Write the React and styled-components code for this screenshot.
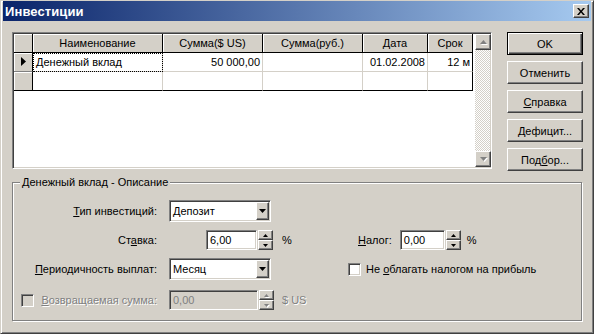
import styled, { createGlobalStyle, css } from "styled-components";

const GlobalStyle = createGlobalStyle`
  html, body { margin: 0; padding: 0; background: #d4d0c8; }
  body {
    font-family: "Liberation Sans", Arial, sans-serif;
    font-size: 11px;
    color: #000;
  }
  * { box-sizing: border-box; }
`;

const raised = css`
  border: 1px solid;
  border-color: #fff #404040 #404040 #fff;
  box-shadow: inset -1px -1px 0 #808080;
  background: #d4d0c8;
`;

const sunken = css`
  border: 1px solid;
  border-color: #808080 #fff #fff #808080;
  box-shadow: inset 1px 1px 0 #404040, inset -1px -1px 0 #d4d0c8;
  padding: 1px;
`;

const Window = styled.div`
  width: 594px;
  height: 334px;
  background: #d4d0c8;
  border: 1px solid;
  border-color: #d4d0c8 #404040 #404040 #d4d0c8;
  box-shadow: inset 1px 1px 0 #fff, inset -1px -1px 0 #808080;
  padding: 0 2px 2px 2px;
  display: flex;
  flex-direction: column;
`;

const TitleBar = styled.div`
  height: 20px;
  background: linear-gradient(to right, #0a246a, #a6caf0);
  display: flex;
  align-items: center;
  justify-content: space-between;
  padding: 0 2px 0 2px;
`;

const Title = styled.span`
  color: #fff;
  font-weight: bold;
  font-size: 13px;
  letter-spacing: 0.1px;
`;

const CloseButton = styled.div`
  ${raised};
  width: 16px;
  height: 14px;
  display: flex;
  align-items: center;
  justify-content: center;
`;

const Body = styled.div`
  flex: 1;
  padding: 11px 8px 0 9px;
  display: flex;
  flex-direction: column;
`;

const TopRow = styled.div`
  display: flex;
  gap: 15px;
  align-items: flex-start;
`;

const GridFrame = styled.div`
  ${sunken};
  width: 480px;
  height: 137px;
  background: #fff;
  display: flex;
  padding: 1px;
`;

const TableArea = styled.div`
  flex: 1;
  background: #fff;
`;

const Table = styled.table`
  border-collapse: separate;
  border-spacing: 0;
  table-layout: fixed;
  width: 459px;
`;

const HeadCell = styled.th`
  height: 19px;
  padding: 0 2px;
  font-weight: normal;
  text-align: center;
  white-space: nowrap;
  overflow: hidden;
  background: #d4d0c8;
  border-right: 1px solid #000;
  border-bottom: 1px solid #000;
  box-shadow: inset 1px 1px 0 #fff;
`;

const IndCell = styled.td`
  height: 19px;
  padding: 0;
  background: #d4d0c8;
  border-right: 1px solid #000;
  border-bottom: 1px solid ${(p) => (p.$last ? "#000" : "#808080")};
  box-shadow: inset 1px 1px 0 #fff;
  text-align: center;
  vertical-align: middle;
`;

const Cell = styled.td`
  height: 19px;
  padding: 0 2px 0 3px;
  white-space: nowrap;
  overflow: hidden;
  text-align: ${(p) => p.$align || "left"};
  border-right: 1px solid ${(p) => (p.$lastCol ? "#000" : "#d4d0c8")};
  border-bottom: 1px solid ${(p) => (p.$last ? "#000" : "#d4d0c8")};
  ${(p) =>
    p.$focus &&
    css`
      outline: 1px dotted #000;
      outline-offset: -1px;
    `}
`;

const ScrollBar = styled.div`
  width: 16px;
  display: flex;
  flex-direction: column;
  border-left: 1px solid #fff;
`;

const ScrollButton = styled.div`
  ${raised};
  width: 16px;
  height: 16px;
  display: flex;
  align-items: center;
  justify-content: center;
`;

const ScrollTrack = styled.div`
  flex: 1;
  background-color: #fff;
  background-image: repeating-conic-gradient(#d4d0c8 0 25%, #fff 0 50%);
  background-size: 2px 2px;
`;

const ButtonColumn = styled.div`
  display: flex;
  flex-direction: column;
  gap: 6px;
`;

const Button = styled.div`
  width: 76px;
  height: 23px;
  display: flex;
  align-items: center;
  justify-content: center;
  background: #d4d0c8;
  ${(p) =>
    p.$default
      ? css`
          border: 1px solid #000;
          box-shadow: inset 1px 1px 0 #fff, inset -1px -1px 0 #404040,
            inset -2px -2px 0 #808080;
        `
      : css`
          border: 1px solid;
          border-color: #fff #404040 #404040 #fff;
          box-shadow: inset -1px -1px 0 #808080;
        `}
`;

const GroupBox = styled.div`
  position: relative;
  margin-top: 11px;
  width: 570px;
  border: 1px solid #808080;
  box-shadow: 1px 1px 0 #fff, inset 1px 1px 0 #fff;
  padding: 17px 0 10px 8px;
`;

const Legend = styled.span`
  position: absolute;
  top: -7px;
  left: 7px;
  padding: 0 2px;
  background: #d4d0c8;
  line-height: 13px;
`;

const FormGrid = styled.div`
  display: grid;
  grid-template-columns: 148px 104px 75px 1fr;
  grid-template-rows: 22px 20px 22px 22px;
  row-gap: 8px;
  align-items: center;
`;

const Label = styled.div`
  padding-right: 12px;
  text-align: right;
  white-space: nowrap;
`;

const CheckRow = styled.div`
  display: flex;
  align-items: center;
  justify-content: space-between;
  padding-right: 12px;
  align-self: end;
  height: 20px;
`;

const Unit = styled.div`
  padding-left: 9px;
  color: ${(p) => (p.$disabled ? "#808080" : "#000")};
  text-shadow: ${(p) => (p.$disabled ? "1px 1px 0 #fff" : "none")};
  align-self: ${(p) => (p.$end ? "end" : "center")};
  line-height: 20px;
`;

const Combo = styled.div`
  ${sunken};
  width: 102px;
  height: 22px;
  background: #fff;
  display: flex;
  align-items: stretch;
`;

const ComboText = styled.div`
  flex: 1;
  padding-left: 2px;
  display: flex;
  align-items: center;
`;

const ComboButton = styled.div`
  ${raised};
  width: 13px;
  display: flex;
  align-items: center;
  justify-content: center;
`;

const SpinWrap = styled.div`
  display: flex;
  gap: 1px;
  justify-self: ${(p) => p.$justify || "start"};
  align-self: ${(p) => (p.$end ? "end" : "center")};
`;

const SpinField = styled.div`
  ${sunken};
  width: ${(p) => p.$width}px;
  height: 20px;
  background: ${(p) => (p.$disabled ? "#d4d0c8" : "#fff")};
  color: ${(p) => (p.$disabled ? "#808080" : "#000")};
  padding-left: 3px;
  display: flex;
  align-items: center;
`;

const SpinButtons = styled.div`
  display: flex;
  flex-direction: column;
  width: 15px;
  height: 20px;
`;

const SpinButton = styled.div`
  ${raised};
  flex: 1;
  display: flex;
  align-items: center;
  justify-content: center;
`;

const RightCell = styled.div`
  display: flex;
  align-items: center;
  gap: ${(p) => p.$gap || 0}px;
  padding-left: ${(p) => p.$pad || 0}px;
  white-space: nowrap;
`;

const CheckBox = styled.div`
  ${sunken};
  width: 13px;
  height: 13px;
  background: ${(p) => (p.$disabled ? "#d4d0c8" : "#fff")};
  flex: none;
`;

const DisabledText = styled.span`
  color: #808080;
  text-shadow: 1px 1px 0 #fff;
`;

const Arrow = ({ dir = "down", w = 7, color = "#000" }) => {
  const h = Math.ceil(w / 2);
  const pts =
    dir === "down"
      ? `0,0 ${w},0 ${w / 2},${h}`
      : `0,${h} ${w},${h} ${w / 2},0`;
  return (
    <svg width={w} height={h} viewBox={`0 0 ${w} ${h}`}>
      <polygon points={pts} fill={color} />
    </svg>
  );
};

const GrayArrow = ({ dir, w = 7 }) => (
  <span style={{ position: "relative", display: "inline-flex" }}>
    <span style={{ position: "absolute", left: 1, top: 1, display: "flex" }}>
      <Arrow dir={dir} w={w} color="#fff" />
    </span>
    <span style={{ position: "relative", display: "flex" }}>
      <Arrow dir={dir} w={w} color="#808080" />
    </span>
  </span>
);

const Spin = ({ value, width, disabled, justify, end }) => (
  <SpinWrap $justify={justify} $end={end}>
    <SpinField $width={width} $disabled={disabled}>
      {value}
    </SpinField>
    <SpinButtons>
      <SpinButton>
        {disabled ? <GrayArrow dir="up" w={5} /> : <Arrow dir="up" w={5} />}
      </SpinButton>
      <SpinButton>
        {disabled ? <GrayArrow dir="down" w={5} /> : <Arrow dir="down" w={5} />}
      </SpinButton>
    </SpinButtons>
  </SpinWrap>
);

const Select = ({ value }) => (
  <Combo>
    <ComboText>{value}</ComboText>
    <ComboButton>
      <Arrow dir="down" w={7} />
    </ComboButton>
  </Combo>
);

const columns = [
  { title: "", width: 19 },
  { title: "Наименование", width: 130 },
  { title: "Сумма($ US)", width: 100 },
  { title: "Сумма(руб.)", width: 100 },
  { title: "Дата", width: 65 },
  { title: "Срок", width: 45 },
];

const rows = [
  ["Денежный вклад", "50 000,00", "", "01.02.2008", "12 м"],
  ["", "", "", "", ""],
];

const aligns = ["left", "right", "right", "right", "right"];

export default function App() {
  return (
    <>
      <GlobalStyle />
      <Window>
        <TitleBar>
          <Title>Инвестиции</Title>
          <CloseButton>
            <svg width="8" height="7" viewBox="0 0 8 7">
              <path d="M0 0h2l2 2.5L6 0h2L5 3.5 8 7H6L4 4.5 2 7H0l3-3.5z" fill="#000" />
            </svg>
          </CloseButton>
        </TitleBar>
        <Body>
          <TopRow>
            <GridFrame>
              <TableArea>
                <Table>
                  <colgroup>
                    {columns.map((c, i) => (
                      <col key={i} style={{ width: c.width }} />
                    ))}
                  </colgroup>
                  <thead>
                    <tr>
                      {columns.map((c, i) => (
                        <HeadCell key={i}>{c.title}</HeadCell>
                      ))}
                    </tr>
                  </thead>
                  <tbody>
                    {rows.map((r, ri) => (
                      <tr key={ri}>
                        <IndCell $last={ri === rows.length - 1}>
                          {ri === 0 && (
                            <svg width="5" height="9" viewBox="0 0 5 9">
                              <polygon points="0,0 5,4.5 0,9" fill="#000" />
                            </svg>
                          )}
                        </IndCell>
                        {r.map((v, ci) => (
                          <Cell
                            key={ci}
                            $align={aligns[ci]}
                            $last={ri === rows.length - 1}
                            $lastCol={ci === r.length - 1}
                            $focus={ri === 0 && ci === 0}
                          >
                            {v}
                          </Cell>
                        ))}
                      </tr>
                    ))}
                  </tbody>
                </Table>
              </TableArea>
              <ScrollBar>
                <ScrollButton>
                  <GrayArrow dir="up" />
                </ScrollButton>
                <ScrollTrack />
                <ScrollButton>
                  <GrayArrow dir="down" />
                </ScrollButton>
              </ScrollBar>
            </GridFrame>
            <ButtonColumn>
              <Button $default>OK</Button>
              <Button>Отменить</Button>
              <Button>
                <span><u>С</u>правка</span>
              </Button>
              <Button>
                <span><u>Д</u>ефицит...</span>
              </Button>
              <Button>
                <span>Под<u>б</u>ор...</span>
              </Button>
            </ButtonColumn>
          </TopRow>

          <GroupBox>
            <Legend>Денежный вклад - Описание</Legend>
            <FormGrid>
              <Label>
                <u>Т</u>ип инвестиций:
              </Label>
              <Select value="Депозит" />
              <div />
              <div />

              <Label>
                Ст<u>а</u>вка:
              </Label>
              <Spin value="6,00" width={51} justify="end" />
              <Unit>%</Unit>
              <RightCell $pad={10}>
                <span style={{ marginRight: 8 }}>
                  <u>Н</u>алог:
                </span>
                <Spin value="0,00" width={45} />
                <span style={{ marginLeft: 6 }}>%</span>
              </RightCell>

              <Label>
                <u>П</u>ериодичность выплат:
              </Label>
              <Select value="Месяц" />
              <div />
              <RightCell $gap={5}>
                <CheckBox />
                <span>
                  Не <u>о</u>благать налогом на прибыль
                </span>
              </RightCell>

              <CheckRow>
                <CheckBox $disabled />
                <DisabledText>
                  <u>В</u>озвращаемая сумма:
                </DisabledText>
              </CheckRow>
              <Spin value="0,00" width={89} disabled end />
              <Unit $disabled $end>
                $ US
              </Unit>
              <div />
            </FormGrid>
          </GroupBox>
        </Body>
      </Window>
    </>
  );
}
